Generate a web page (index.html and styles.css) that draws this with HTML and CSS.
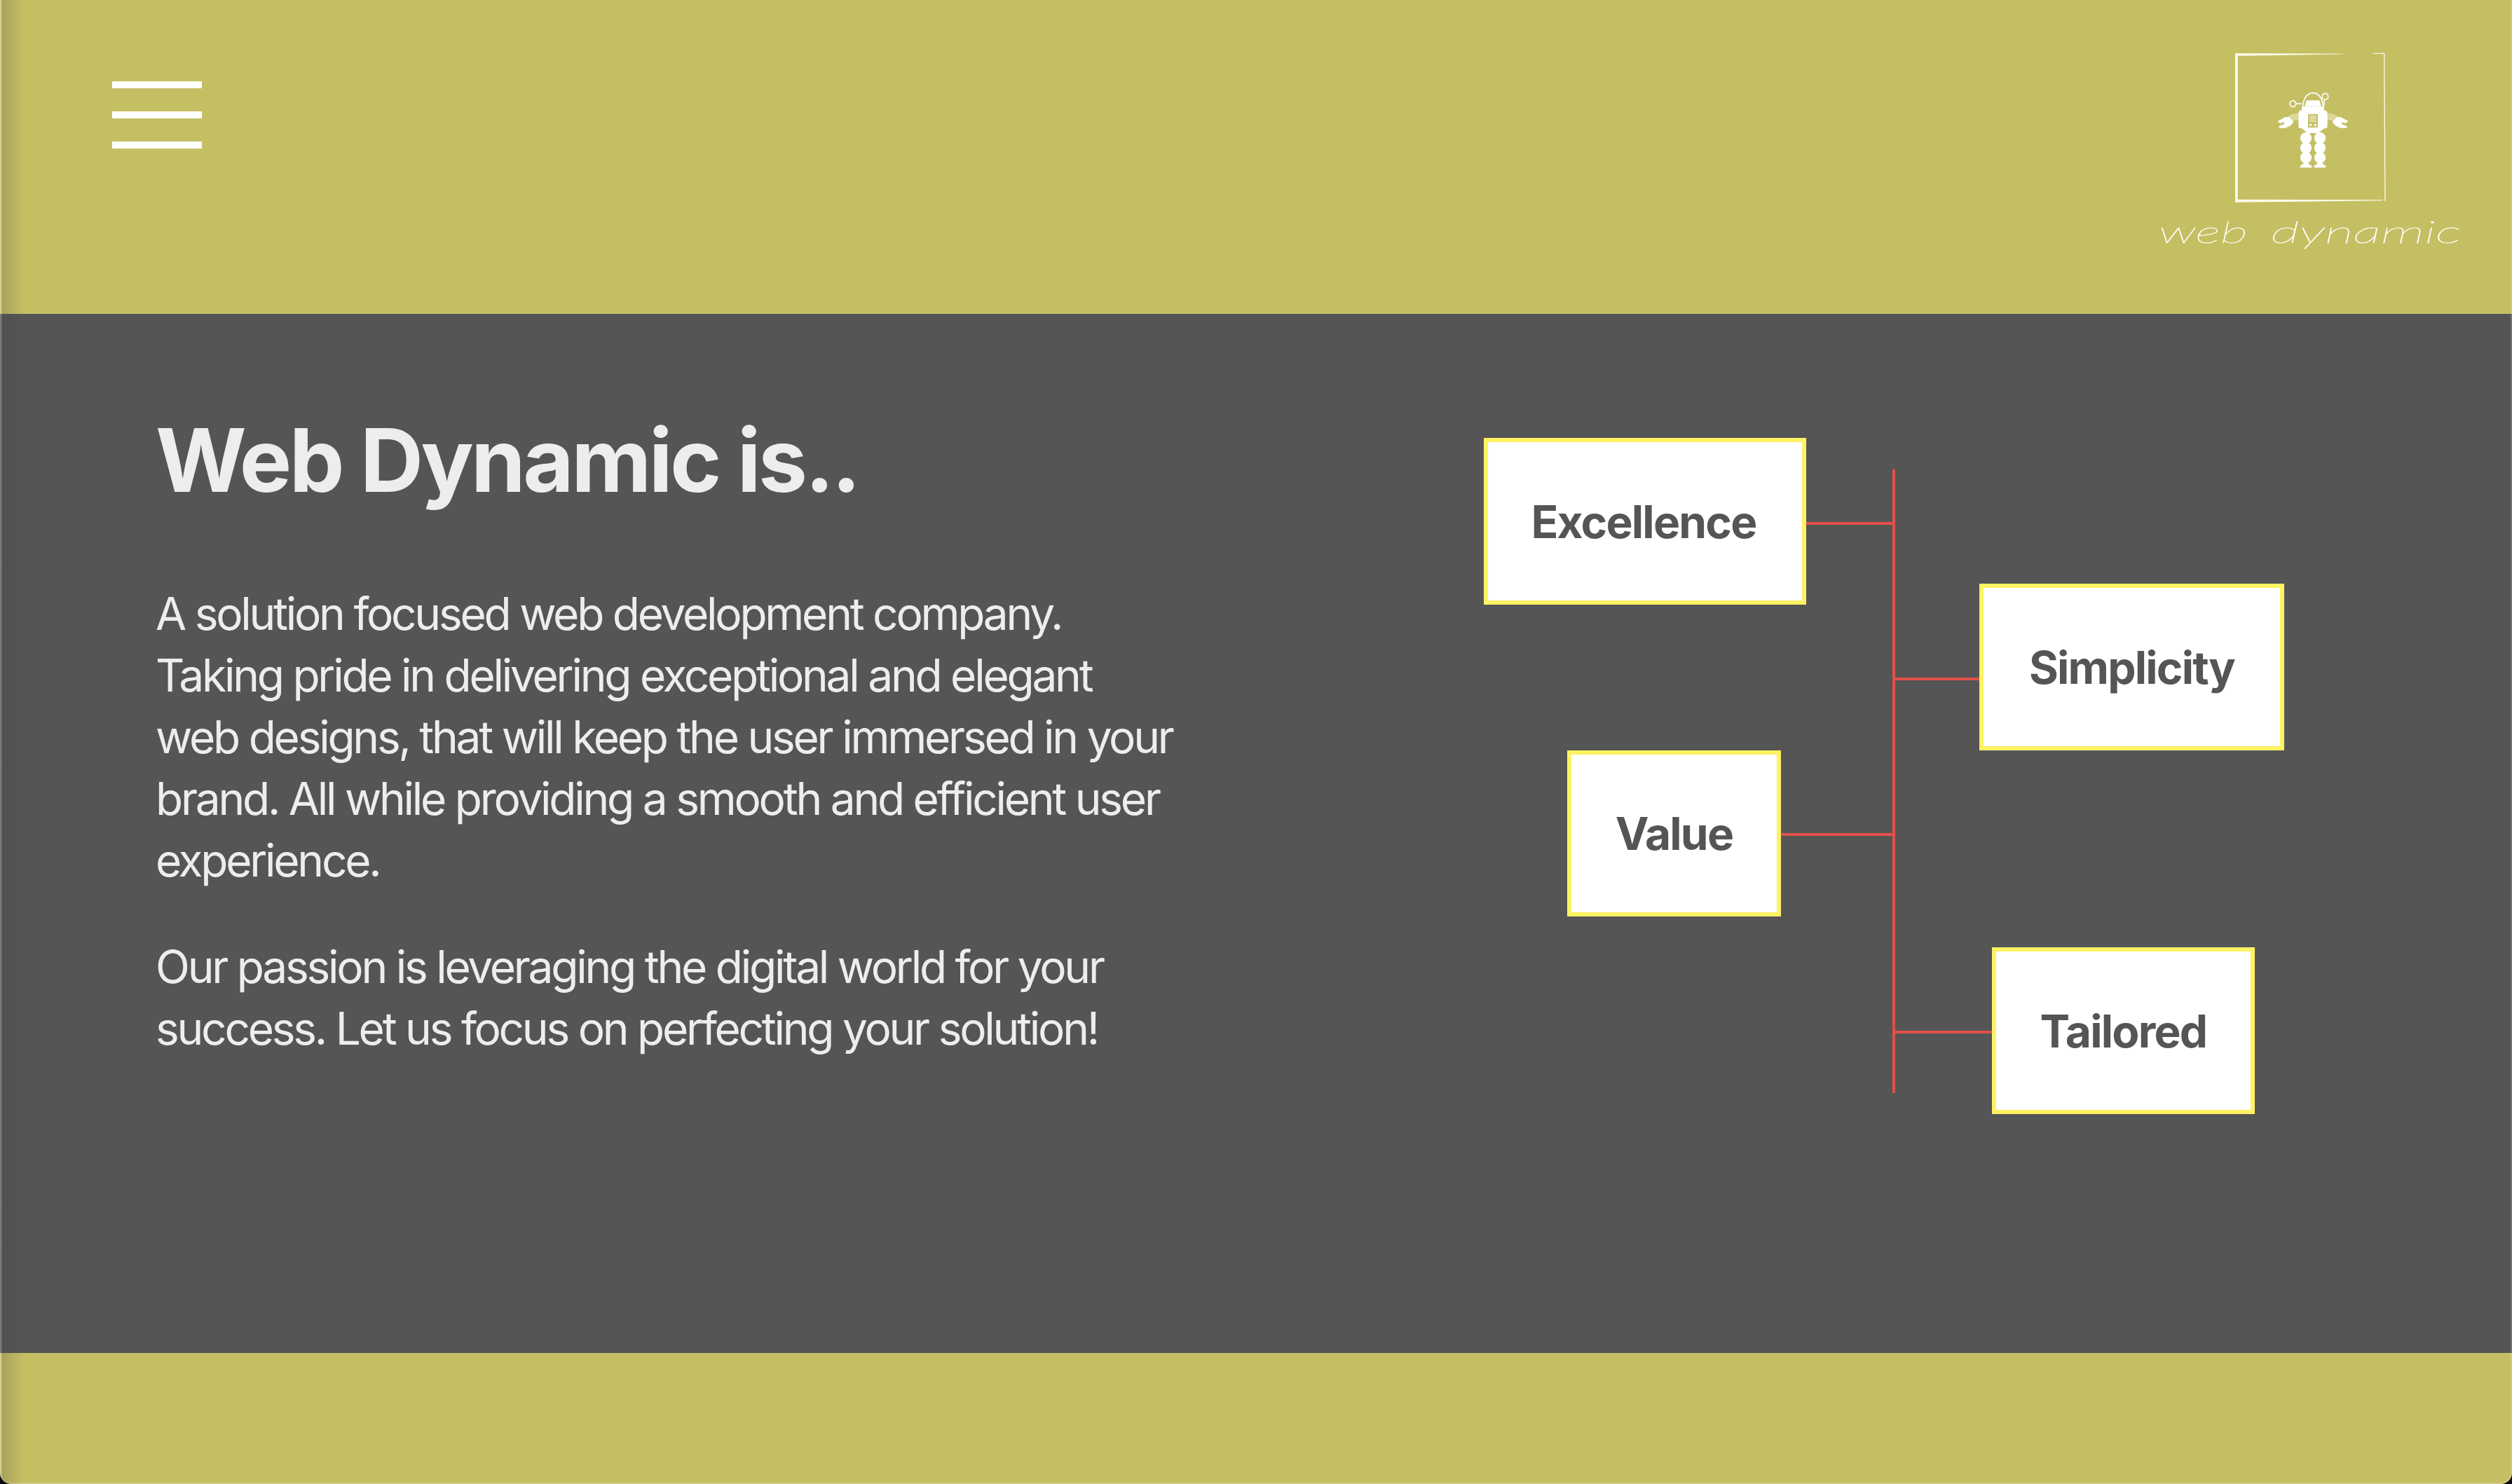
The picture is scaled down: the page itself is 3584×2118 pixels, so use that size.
FILE: index.html
```html
<!DOCTYPE html>
<html lang="en">
<head>
<meta charset="utf-8">
<title>Web Dynamic</title>
<link rel="stylesheet" href="styles.css">
</head>
<body>
<div class="window">
  <header class="top">
    <button class="burger" aria-label="Menu"><span></span><span></span><span></span></button>
    <svg class="logo" viewBox="0 0 1500 1020" aria-label="web dynamic">
      <g class="frame">
        <polygon points="447,108 910,110 910,112 458,119 458,734 1078,736 1078,739 447,746"/>
        <polygon points="1036,107 1087,107 1091,742 1087,742 1083,111 1036,110"/>
      </g>
      <g class="robot">
        <g id="half">
          <path class="line" d="M735 348C738 300 755 278 781 278"/>
          <polygon points="752,310 781,310 781,335 745,335"/>
          <path d="M733 336H781V450H758L732 430H728C722 430 718 426 718 420V365C718 358 724 352 733 352Z"/>
          <path class="coil" d="M718 380C705 378 692 382 680 392"/>
          <path d="M628 400L660 382L678 380L697 402L684 418L662 428L636 428L634 420L654 413L660 403L640 407Z"/>
          <circle cx="750" cy="471" r="24.5"/>
          <circle cx="750" cy="513" r="24.5"/>
          <circle cx="750" cy="555" r="24.5"/>
          <path d="M725 598V590C735 585 742 578 750 568C758 578 765 585 775 590V598Z"/>
        </g>
        <use href="#half" class="mirror"/>
        <path class="line" d="M732 324H706"/>
        <circle class="ring" cx="694" cy="324" r="13"/>
        <circle class="ring" cx="832" cy="293" r="13"/>
        <path class="line" d="M829 306L827 332"/>
        <rect class="panel" x="759" y="368" width="42" height="58" rx="3"/>
        <path class="stripes" d="M765 376H795M765 382H795M765 388H795M765 394H795M765 400H795"/>
        <circle cx="770" cy="415" r="5"/>
        <circle cx="790" cy="415" r="5"/>
      </g>
      <text class="wordmark" x="120" y="920" textLength="380" lengthAdjust="spacingAndGlyphs">web</text>
      <text class="wordmark" x="600" y="920" textLength="815" lengthAdjust="spacingAndGlyphs">dynamic</text>
    </svg>
  </header>
  <main class="content">
    <section class="intro">
      <h1 class="title">Web Dynamic is..</h1>
      <p class="copy">A solution focused web development company.<br>Taking pride in delivering exceptional and elegant<br>web designs, that will keep the user immersed in your<br>brand. All while providing a smooth and efficient user<br>experience.</p>
      <p class="copy">Our passion is leveraging the digital world for your<br>success. Let us focus on perfecting your solution!</p>
    </section>
    <section class="diagram">
      <div class="spine"></div>
      <div class="link link-excellence"></div>
      <div class="link link-simplicity"></div>
      <div class="link link-value"></div>
      <div class="link link-tailored"></div>
      <div class="node node-excellence">Excellence</div>
      <div class="node node-simplicity">Simplicity</div>
      <div class="node node-value">Value</div>
      <div class="node node-tailored">Tailored</div>
    </section>
  </main>
  <footer class="bottom"></footer>
</div>
</body>
</html>
```

FILE: styles.css
```css
* { box-sizing: border-box; }
html, body { margin: 0; height: 100%; background: #0b0b14; }
body { font-family: Inter, "Liberation Sans", sans-serif; }

.window {
  position: relative;
  height: 2118px;
  display: flex;
  flex-direction: column;
  overflow: hidden;
  border-radius: 0 0 16px 16px;
  background: #555;
}
.window::before {
  content: "";
  position: absolute;
  inset: 0 auto 0 0;
  width: 34px;
  background: linear-gradient(90deg, rgba(255,255,255,.22) 0, rgba(255,255,255,.22) 2px, rgba(60,60,60,.22) 3px, rgba(60,60,60,.14) 14px, rgba(60,60,60,0) 34px);
  pointer-events: none;
  z-index: 2;
}
.window::after {
  content: "";
  position: absolute;
  inset: 0;
  border-right: 2px solid rgba(255,255,255,.18);
  border-bottom: 2px solid rgba(255,255,255,.18);
  border-radius: 0 0 16px 16px;
  pointer-events: none;
  z-index: 2;
}

.top {
  height: 448px;
  flex: none;
  display: flex;
  justify-content: space-between;
  align-items: flex-start;
  padding: 40px 44px 0 160px;
  background: #c5bf64;
}
.burger {
  display: flex;
  flex-direction: column;
  gap: 33px;
  width: 128px;
  margin-top: 76px;
  padding: 0;
  border: 0;
  background: none;
}
.burger span { display: block; height: 10px; background: #fff; }

.logo { width: 500px; height: 340px; display: block; }
.frame, .robot { fill: #fff; }
.frame polygon { fill: #fbfbe8; }
.robot .line { fill: none; stroke: #fff; stroke-width: 5; }
.robot .ring { fill: none; stroke: #fff; stroke-width: 5; }
.robot .coil { fill: none; stroke: #f4f1cf; stroke-width: 28; stroke-dasharray: 3 3; }
.robot .panel { fill: #c5bf64; }
.robot .stripes { fill: none; stroke: #f4f1cf; stroke-width: 3; }
.robot .mirror { transform: translateX(1560px) scaleX(-1); }
.wordmark {
  font-family: Lato, sans-serif;
  font-style: italic;
  font-weight: 100;
  font-size: 135px;
  fill: #fff;
  stroke: #fff;
  stroke-width: 1.5;
}

.content {
  flex: 1;
  display: flex;
  justify-content: space-between;
  align-items: flex-start;
  padding: 146px 325px 0 222px;
}
.intro { color: #ededed; }
.title {
  margin: 0 0 113px;
  font-size: 125px;
  line-height: 125px;
  font-weight: 700;
  letter-spacing: -0.029em;
}
.copy {
  margin: 0 0 64px;
  font-size: 64px;
  line-height: 88px;
  font-weight: 400;
  letter-spacing: -0.051em;
}

.diagram {
  position: relative;
  width: 1142px;
  height: 965px;
  margin-top: 31px;
}
.spine, .link { position: absolute; background: #e2504a; }
.spine { left: 583px; top: 45px; width: 4px; height: 890px; }
.link { height: 4px; }
.link-excellence { left: 460px; top: 120px; width: 123px; }
.link-simplicity { left: 587px; top: 342px; width: 120px; }
.link-value { left: 424px; top: 564px; width: 159px; }
.link-tailored { left: 587px; top: 846px; width: 138px; }

.node {
  position: absolute;
  display: flex;
  align-items: center;
  justify-content: center;
  height: 238px;
  border: 6px solid #fff263;
  background: #fff;
  color: #555;
  font-size: 64px;
  font-weight: 700;
  letter-spacing: -0.028em;
}
.node-excellence { left: 0; top: 0; width: 460px; padding-right: 4px; }
.node-simplicity { left: 707px; top: 208px; width: 435px; }
.node-value { left: 119px; top: 446px; width: 305px; height: 237px; }
.node-tailored { left: 725px; top: 727px; width: 375px; }

.bottom { height: 187px; flex: none; background: #c5bf64; }
```
